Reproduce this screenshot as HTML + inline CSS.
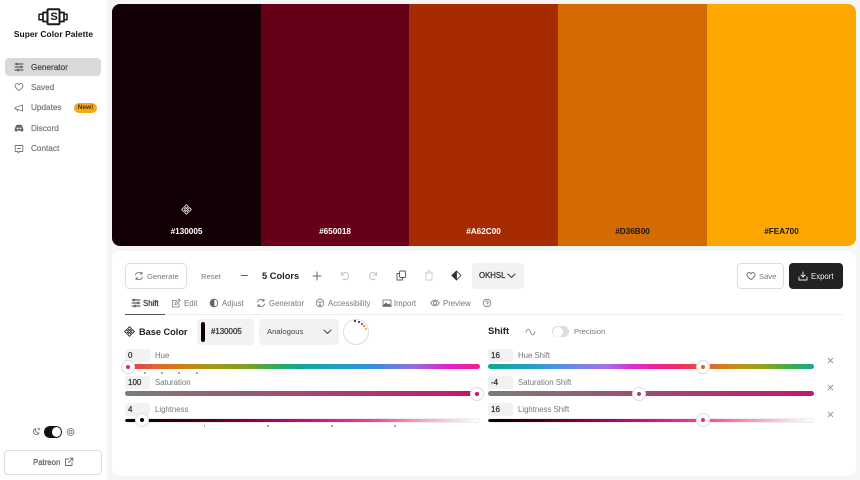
<!DOCTYPE html>
<html><head><meta charset="utf-8">
<style>
html,body{margin:0;padding:0}
body{width:860px;height:480px;overflow:hidden;background:#f5f5f5;font-family:"Liberation Sans",sans-serif;position:relative;color:#222}
.a{position:absolute}
.t{position:absolute;white-space:nowrap;line-height:12px}
.sb{-webkit-text-stroke:.25px currentColor}
svg{position:absolute;fill:none;stroke:currentColor;stroke-linecap:round;stroke-linejoin:round}
.nav{font-size:8.2px;color:#777;left:31px;-webkit-text-stroke:.2px currentColor}
.sw{position:absolute;top:4px;height:242px}
.hex{position:absolute;left:0;right:0;text-align:center;top:223px;font-size:8.2px;font-weight:bold;line-height:10px}
.tab{font-size:7.8px;color:#777;top:298px}
.num{position:absolute;background:#f2f2f2;border-radius:2px;width:25px;height:13px;font-size:8px;line-height:14px;text-indent:3px;color:#333;-webkit-text-stroke:.25px currentColor}
.lbl{font-size:7.8px;color:#777}
.tr{position:absolute;height:5px;border-radius:3px}
.th{position:absolute;width:14px;height:14px;border-radius:50%;background:#fff;border:1px solid #ddd;box-sizing:border-box}
.th i{position:absolute;left:4px;top:4px;width:4px;height:4px;border-radius:50%}
.tick{position:absolute;width:1.5px;height:1.5px;background:#999;border-radius:50%}
</style></head><body>

<div class="a" style="left:0;top:0;width:107px;height:480px;background:#fff"></div>

<!-- logo -->
<svg style="left:38px;top:8px;color:#1a1a1a" width="30" height="18" viewBox="0 0 30 18" stroke-width="1.6">
<rect x="9.5" y="1.2" width="12" height="15" rx="1" stroke-width="2"/>
<path d="M9 4.5H5V13.5H9M22 4.5H26V13.5H22" stroke-width="1.7"/>
<path d="M5 6.3H1V11.7H5M26 6.3H29V11.7H26" stroke-width="1.5"/>
</svg>
<div class="t" style="left:47.5px;top:11px;width:13px;text-align:center;font-size:11px;font-weight:bold;color:#111">S</div>
<div class="t" style="left:0;width:107px;text-align:center;top:28px;font-size:8.4px;font-weight:bold;color:#111;letter-spacing:.01em">Super Color Palette</div>

<div class="a" style="left:5px;top:58px;width:96px;height:18px;background:#d9d9d9;border-radius:4px"></div>
<svg style="left:14px;top:62px;color:#444" width="10" height="10" viewBox="0 0 10 10" stroke-width=".9"><path d="M1 2H9M1 5H9M1 8H9M3 1V3M7 4V6M4 7V9"/></svg>
<div class="t nav" style="top:62px;color:#444">Generator</div>
<svg style="left:14px;top:82px;color:#777" width="10" height="10" viewBox="0 0 10 10" stroke-width=".9"><path d="M5 8.5C2.5 6.8 1 5.5 1 3.7 1 2.4 2 1.6 3 1.6 3.8 1.6 4.6 2 5 2.8 5.4 2 6.2 1.6 7 1.6 8 1.6 9 2.4 9 3.7 9 5.5 7.5 6.8 5 8.5Z"/></svg>
<div class="t nav" style="top:82px">Saved</div>
<svg style="left:14px;top:103px;color:#777" width="10" height="10" viewBox="0 0 10 10" stroke-width=".9"><path d="M1 4.5V6L3 6.2 8.5 8V2L3 4ZM3 6.2L3.5 8"/></svg>
<div class="t nav" style="top:102px">Updates</div>
<div class="a" style="left:74px;top:103px;width:23px;height:10px;border-radius:5px;background:#f7a90f;font-size:6.5px;font-weight:bold;text-align:center;line-height:10px;color:#333">New!</div>
<svg style="left:14px;top:123px;fill:#666;stroke:none" width="10" height="10" viewBox="0 0 10 10"><path d="M2.5 2C3.5 1.6 6.5 1.6 7.5 2 8.6 3.5 9.3 5.5 9.5 7.7 8.8 8.2 8 8.5 7.2 8.6L6.6 7.6H3.4L2.8 8.6C2 8.5 1.2 8.2.5 7.7.7 5.5 1.4 3.5 2.5 2Z"/><circle cx="3.6" cy="5.4" r=".9" fill="#fff"/><circle cx="6.4" cy="5.4" r=".9" fill="#fff"/></svg>
<div class="t nav" style="top:123px">Discord</div>
<svg style="left:14px;top:144px;color:#777" width="10" height="10" viewBox="0 0 10 10" stroke-width=".9"><path d="M1.2 1.5H8.8V7.5H5.5L4 9V7.5H1.2ZM3.5 4.5H6.5"/></svg>
<div class="t nav" style="top:143px">Contact</div>

<!-- theme toggle -->
<svg style="left:32px;top:427px;color:#666" width="9" height="9" viewBox="0 0 9 9" stroke-width=".8"><path d="M4 1.5A3 3 0 1 0 7 6 3 3 0 0 1 4 1.5ZM6 2H8M7 1V3"/></svg>
<div class="a" style="left:44px;top:426px;width:18px;height:12px;border-radius:6px;background:#111"></div>
<div class="a" style="left:52px;top:427px;width:9px;height:10px;border-radius:50%;background:#fff"></div>
<svg style="left:66px;top:427px;color:#666" width="9" height="10" viewBox="0 0 9 10" stroke-width=".8"><circle cx="4.5" cy="5" r="1.5"/><circle cx="4.5" cy="5" r="3.4" stroke-dasharray="1.2 .6"/></svg>
<div class="a" style="left:4px;top:450px;width:98px;height:25px;border:1px solid #ddd;border-radius:4px;box-sizing:border-box"></div>
<div class="t sb" style="left:33px;top:456.5px;font-size:7.8px;color:#666">Patreon</div>
<svg style="left:64px;top:457px;color:#666" width="10" height="10" viewBox="0 0 10 10" stroke-width=".9"><path d="M4.5 2H1.5V8.5H8V5.5M6 1.2H8.8V4M8.6 1.4L4.5 5.5"/></svg>

<!-- palette -->
<div class="sw" style="left:112px;width:149px;background:#130005;border-radius:8px 0 0 8px;color:#fff"><div class="hex">#130005</div></div>
<div class="sw" style="left:261px;width:148px;background:#650018;color:#fff"><div class="hex">#650018</div></div>
<div class="sw" style="left:409px;width:149px;background:#a62c00;color:#fff"><div class="hex">#A62C00</div></div>
<div class="sw" style="left:558px;width:149px;background:#d36b00;color:#1a1a1a"><div class="hex">#D36B00</div></div>
<div class="sw" style="left:707px;width:149px;background:#fea700;border-radius:0 8px 8px 0;color:#1a1a1a"><div class="hex">#FEA700</div></div>
<svg style="left:181px;top:204px;color:#ddd" width="11" height="11" viewBox="0 0 11 11" stroke-width=".9"><path d="M5.5.7L7.4 2.6 5.5 4.5 3.6 2.6ZM5.5 6.5L7.4 8.4 5.5 10.3 3.6 8.4ZM2.6 3.6L4.5 5.5 2.6 7.4.7 5.5ZM8.4 3.6L10.3 5.5 8.4 7.4 6.5 5.5Z"/></svg>

<!-- panel -->
<div class="a" style="left:112px;top:251px;width:744px;height:225px;background:#fff;border-radius:8px"></div>

<div class="a" style="left:125px;top:263px;width:62px;height:26px;border:1px solid #ddd;border-radius:4px;box-sizing:border-box"></div>
<svg style="left:134px;top:271px;color:#777" width="10" height="10" viewBox="0 0 10 10" stroke-width=".9"><path d="M1.5 4A3.6 3.6 0 0 1 8 3M8.5 6A3.6 3.6 0 0 1 2 7M8 1.2V3H6.2M2 8.8V7H3.8"/></svg>
<div class="t" style="left:147px;top:271px;font-size:7.6px;color:#777">Generate</div>
<div class="t" style="left:201px;top:271px;font-size:7.6px;color:#777">Reset</div>
<div class="a" style="left:241px;top:275px;width:7px;height:1px;background:#666"></div>
<div class="t" style="left:262px;top:270px;font-size:9.3px;font-weight:bold;color:#222">5 Colors</div>
<svg style="left:312px;top:271px;color:#666" width="10" height="10" viewBox="0 0 10 10" stroke-width="1"><path d="M5 1V9M1 5H9"/></svg>
<svg style="left:340px;top:271px;color:#bbb" width="10" height="10" viewBox="0 0 10 10" stroke-width=".9"><path d="M1.5 1.5V4.2H4.2M1.5 4.2A3.6 3.6 0 1 1 3 8"/></svg>
<svg style="left:368px;top:271px;color:#bbb" width="10" height="10" viewBox="0 0 10 10" stroke-width=".9"><path d="M8.5 1.5V4.2H5.8M8.5 4.2A3.6 3.6 0 1 0 7 8"/></svg>
<svg style="left:396px;top:270px;color:#555" width="10" height="11" viewBox="0 0 10 11" stroke-width=".9"><rect x="3.5" y="1" width="6" height="6.5" rx="1"/><path d="M3.5 3.5H1V10H6.5V7.5"/></svg>
<svg style="left:424px;top:270px;color:#ccc" width="10" height="11" viewBox="0 0 10 11" stroke-width=".9"><path d="M2 3V10H8V3M1 3H9M3.5 3V1H6.5V3"/></svg>
<svg style="left:451px;top:270px;color:#333" width="11" height="11" viewBox="0 0 11 11" stroke-width=".8"><path d="M5.5 1L10 5.5 5.5 10 1 5.5Z"/><path d="M5.5 1L1 5.5 5.5 10Z" fill="#333"/></svg>
<div class="a" style="left:472px;top:263px;width:52px;height:26px;background:#f2f2f2;border-radius:4px"></div>
<div class="t sb" style="left:479px;top:270px;font-size:7.8px;color:#333">OKHSL</div>
<svg style="left:507px;top:272px;color:#333" width="9" height="8" viewBox="0 0 9 8" stroke-width="1"><path d="M1 2L4.5 5.5 8 2"/></svg>

<div class="a" style="left:737px;top:263px;width:47px;height:26px;border:1px solid #ddd;border-radius:4px;box-sizing:border-box"></div>
<svg style="left:746px;top:271px;color:#666" width="10" height="10" viewBox="0 0 10 10" stroke-width=".9"><path d="M5 8.5C2.5 6.8 1 5.5 1 3.7 1 2.4 2 1.6 3 1.6 3.8 1.6 4.6 2 5 2.8 5.4 2 6.2 1.6 7 1.6 8 1.6 9 2.4 9 3.7 9 5.5 7.5 6.8 5 8.5Z"/></svg>
<div class="t" style="left:759px;top:271px;font-size:7.6px;color:#777">Save</div>
<div class="a" style="left:789px;top:263px;width:54px;height:26px;background:#222;border-radius:4px"></div>
<svg style="left:798px;top:271px;color:#eee" width="10" height="10" viewBox="0 0 10 10" stroke-width=".9"><path d="M1 6V9H9V6M5 1V6M3 4L5 6 7 4"/></svg>
<div class="t" style="left:811px;top:271px;font-size:7.8px;color:#eee">Export</div>

<!-- tabs -->
<div class="a" style="left:125px;top:314px;width:718px;height:1px;background:#eee"></div>
<div class="a" style="left:125px;top:313.5px;width:40px;height:1.5px;background:#555"></div>
<svg style="left:131px;top:298px;color:#333" width="10" height="10" viewBox="0 0 10 10" stroke-width=".9"><path d="M1 2H9M1 5H9M1 8H9M3 1V3M7 4V6M4 7V9"/></svg>
<div class="t tab sb" style="left:143px;color:#333">Shift</div>
<svg style="left:171px;top:298px;color:#777" width="10" height="10" viewBox="0 0 10 10" stroke-width=".8"><path d="M8 5.5V9H1.5V2.5H5M4 6.5V5L8 1 9.2 2.2 5.3 6.5Z"/></svg>
<div class="t tab" style="left:184px">Edit</div>
<svg style="left:209px;top:298px;color:#666" width="10" height="10" viewBox="0 0 10 10" stroke-width=".8"><circle cx="5" cy="5" r="3.8"/><path d="M5 1.2A3.8 3.8 0 0 0 5 8.8Z" fill="#666"/></svg>
<div class="t tab" style="left:222px">Adjust</div>
<svg style="left:256px;top:298px;color:#777" width="10" height="10" viewBox="0 0 10 10" stroke-width=".9"><path d="M1.5 4A3.6 3.6 0 0 1 8 3M8.5 6A3.6 3.6 0 0 1 2 7M8 1.2V3H6.2M2 8.8V7H3.8"/></svg>
<div class="t tab" style="left:269px">Generator</div>
<svg style="left:315px;top:298px;color:#777" width="10" height="10" viewBox="0 0 10 10" stroke-width=".8"><circle cx="5" cy="5" r="3.8"/><path d="M3 4H7M5 4V6M4 8L5 6 6 8"/></svg>
<div class="t tab" style="left:328px">Accessibility</div>
<svg style="left:382px;top:298px;color:#666" width="10" height="10" viewBox="0 0 10 10" stroke-width=".8"><rect x="1" y="2" width="8" height="6.5"/><path d="M1 8L4 5 6 7 7 6 9 8" fill="#666"/></svg>
<div class="t tab" style="left:394px">Import</div>
<svg style="left:430px;top:298px;color:#777" width="10" height="10" viewBox="0 0 10 10" stroke-width=".8"><path d="M.8 5C2 3 3.4 2.2 5 2.2S8 3 9.2 5C8 7 6.6 7.8 5 7.8S2 7 .8 5Z"/><circle cx="5" cy="5" r="1.5"/></svg>
<div class="t tab" style="left:443px">Preview</div>
<svg style="left:482px;top:298px;color:#777" width="10" height="10" viewBox="0 0 10 10" stroke-width=".8"><circle cx="5" cy="5" r="3.8"/><path d="M3.9 4A1.2 1.2 0 1 1 5 5.5V6M5 7.2V7.3"/></svg>

<!-- Base color row -->
<svg style="left:124px;top:326px;color:#222" width="11" height="11" viewBox="0 0 11 11" stroke-width=".9"><path d="M5.5.7L7.4 2.6 5.5 4.5 3.6 2.6ZM5.5 6.5L7.4 8.4 5.5 10.3 3.6 8.4ZM2.6 3.6L4.5 5.5 2.6 7.4.7 5.5ZM8.4 3.6L10.3 5.5 8.4 7.4 6.5 5.5Z"/></svg>
<div class="t" style="left:139px;top:326px;font-size:9.2px;font-weight:bold;color:#222">Base Color</div>
<div class="a" style="left:197px;top:319px;width:57px;height:26px;background:#f2f2f2;border-radius:4px"></div>
<div class="a" style="left:201px;top:322px;width:4px;height:20px;background:#130005;border-radius:2px"></div>
<div class="t sb" style="left:211px;top:326px;font-size:7.9px;color:#333">#130005</div>
<div class="a" style="left:259px;top:319px;width:80px;height:26px;background:#f2f2f2;border-radius:4px"></div>
<div class="t" style="left:267px;top:326px;font-size:7.7px;color:#444">Analogous</div>
<svg style="left:323px;top:328px;color:#444" width="9" height="8" viewBox="0 0 9 8" stroke-width="1"><path d="M1 2L4.5 5.5 8 2"/></svg>
<div class="a" style="left:343px;top:319px;width:26px;height:26px;border:1px solid #ddd;border-radius:50%;box-sizing:border-box"></div>
<div class="a" style="left:354px;top:320px;width:2px;height:2px;background:#130005;border-radius:50%"></div>
<div class="a" style="left:358px;top:321px;width:2px;height:2px;background:#650018;border-radius:50%"></div>
<div class="a" style="left:361px;top:323px;width:2px;height:2px;background:#a62c00;border-radius:50%"></div>
<div class="a" style="left:363px;top:325px;width:2px;height:2px;background:#d36b00;border-radius:50%"></div>
<div class="a" style="left:365px;top:328px;width:2px;height:2px;background:#fea700;border-radius:50%"></div>

<div class="t" style="left:488px;top:326px;font-size:9.5px;font-weight:bold;color:#222">Shift</div>
<svg style="left:525px;top:327px;color:#777" width="11" height="10" viewBox="0 0 11 10" stroke-width=".8"><path d="M1 5C2.5 1 4 1 5.5 5S8.5 9 10 5"/></svg>
<div class="a" style="left:552px;top:326px;width:17px;height:11px;border-radius:6px;background:#ddd"></div>
<div class="a" style="left:552.5px;top:326.5px;width:10px;height:10px;border-radius:50%;background:#fff"></div>
<div class="t" style="left:574px;top:326px;font-size:7.6px;color:#777">Precision</div>

<!-- left sliders -->
<div class="num" style="left:125px;top:349px">0</div>
<div class="t lbl" style="left:155px;top:350px">Hue</div>
<div class="tr" style="left:125px;top:364px;width:355px;background:linear-gradient(90deg,#f0325a 0%,#e2662a 9%,#cf8010 16%,#a09a18 26%,#7aa020 35%,#2aac60 43%,#10a890 49%,#1ea0c8 60%,#3090e0 69%,#9070e0 81%,#e020d0 91%,#f0208a 100%)"></div>
<div class="th" style="left:120.5px;top:359.5px"><i style="background:#e8246e"></i></div>
<div class="tick" style="left:144px;top:372px"></div><div class="tick" style="left:161px;top:372px"></div><div class="tick" style="left:178px;top:372px"></div><div class="tick" style="left:196px;top:372px"></div>

<div class="num" style="left:125px;top:376px">100</div>
<div class="t lbl" style="left:155px;top:377px">Saturation</div>
<div class="tr" style="left:125px;top:391px;width:355px;background:linear-gradient(90deg,#7c7c7c,#c8146c)"></div>
<div class="th" style="left:469.5px;top:386.5px"><i style="background:#c8146c"></i></div>

<div class="num" style="left:125px;top:403px">4</div>
<div class="t lbl" style="left:155px;top:404px">Lightness</div>
<div class="tr" style="left:125px;top:417.5px;width:355px;box-sizing:border-box;border:1px solid #eee;border-left:0;background:linear-gradient(90deg,#000 0%,#3a0018 18%,#8a0048 36%,#d41280 54%,#f4409a 70%,#f8a8cc 85%,#fff 100%)"></div>
<div class="th" style="left:134.5px;top:413px"><i style="background:#130005"></i></div>
<div class="tick" style="left:203.5px;top:425px"></div><div class="tick" style="left:267px;top:425px"></div><div class="tick" style="left:331px;top:425px"></div><div class="tick" style="left:394px;top:425px"></div>

<!-- right sliders -->
<div class="num" style="left:488px;top:349px">16</div>
<div class="t lbl" style="left:518px;top:350px">Hue Shift</div>
<div class="tr" style="left:488px;top:364px;width:326px;background:linear-gradient(90deg,#10a98a 0%,#1ea0c8 12%,#5c8ee8 24%,#a770e8 36%,#d830d8 44%,#f0209a 52%,#f0325a 60%,#e2662a 68%,#c79012 76%,#8ea51c 85%,#3aae48 93%,#10a98a 100%)"></div>
<div class="th" style="left:695.5px;top:359.5px"><i style="background:#d36b10"></i></div>

<div class="num" style="left:488px;top:376px">-4</div>
<div class="t lbl" style="left:518px;top:377px">Saturation Shift</div>
<div class="tr" style="left:488px;top:391px;width:326px;background:linear-gradient(90deg,#7c7c7c,#c8146c)"></div>
<div class="th" style="left:631.5px;top:386.5px"><i style="background:#a0446c"></i></div>

<div class="num" style="left:488px;top:403px">16</div>
<div class="t lbl" style="left:518px;top:404px">Lightness Shift</div>
<div class="tr" style="left:488px;top:417.5px;width:326px;box-sizing:border-box;border:1px solid #eee;border-left:0;background:linear-gradient(90deg,#000 0%,#3a0018 15%,#8a0048 30%,#d41280 50%,#f4409a 66%,#f8a8cc 84%,#fff 100%)"></div>
<div class="th" style="left:695.5px;top:413px"><i style="background:#e0307f"></i></div>

<svg style="left:827px;top:357px;color:#888" width="7" height="7" viewBox="0 0 7 7" stroke-width=".8"><path d="M1.2 1.2L5.8 5.8M5.8 1.2L1.2 5.8"/></svg>
<svg style="left:827px;top:384px;color:#888" width="7" height="7" viewBox="0 0 7 7" stroke-width=".8"><path d="M1.2 1.2L5.8 5.8M5.8 1.2L1.2 5.8"/></svg>
<svg style="left:827px;top:411px;color:#888" width="7" height="7" viewBox="0 0 7 7" stroke-width=".8"><path d="M1.2 1.2L5.8 5.8M5.8 1.2L1.2 5.8"/></svg>

</body></html>
